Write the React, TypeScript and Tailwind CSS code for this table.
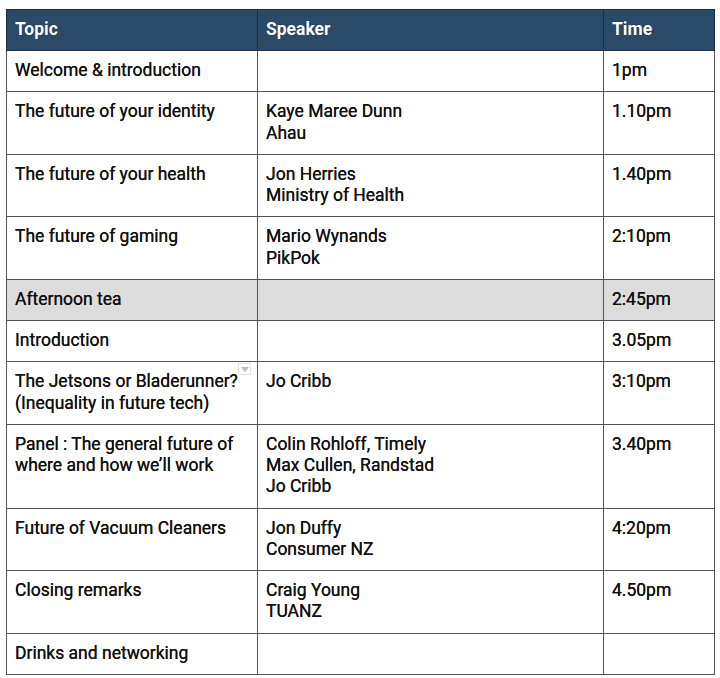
type Row = {
  topic: string[];
  speaker: string[];
  time: string;
  shaded?: boolean;
  menu?: boolean;
};

const rows: Row[] = [
  { topic: ["Welcome & introduction"], speaker: [], time: "1pm" },
  { topic: ["The future of your identity"], speaker: ["Kaye Maree Dunn", "Ahau"], time: "1.10pm" },
  { topic: ["The future of your health"], speaker: ["Jon Herries", "Ministry of Health"], time: "1.40pm" },
  { topic: ["The future of gaming"], speaker: ["Mario Wynands", "PikPok"], time: "2:10pm" },
  { topic: ["Afternoon tea"], speaker: [], time: "2:45pm", shaded: true },
  { topic: ["Introduction"], speaker: [], time: "3.05pm" },
  { topic: ["The Jetsons or Bladerunner?", "(Inequality in future tech)"], speaker: ["Jo Cribb"], time: "3:10pm", menu: true },
  {
    topic: ["Panel : The general future of", "where and how we’ll work"],
    speaker: ["Colin Rohloff, Timely", "Max Cullen, Randstad", "Jo Cribb"],
    time: "3.40pm",
  },
  { topic: ["Future of Vacuum Cleaners"], speaker: ["Jon Duffy", "Consumer NZ"], time: "4:20pm" },
  { topic: ["Closing remarks"], speaker: ["Craig Young", "TUANZ"], time: "4.50pm" },
  { topic: ["Drinks and networking"], speaker: [], time: "" },
];

function Lines({ lines }: { lines: string[] }) {
  return (
    <>
      {lines.map((l) => (
        <div key={l}>{l}</div>
      ))}
    </>
  );
}

export default function App() {
  return (
    <div className="min-h-[678px] bg-white pl-[6px] pt-[9px] font-['Roboto','Liberation_Sans',sans-serif] text-[17.5px] leading-[21.25px] text-[#111] [text-shadow:0_0_0.4px_#111]">
      <table className="w-[708px] table-fixed border-collapse border border-[#444]">
        <colgroup>
          <col className="w-[251px]" />
          <col className="w-[346px]" />
          <col className="w-[111px]" />
        </colgroup>
        <thead>
          <tr className="h-[41px] bg-[#2a4a68] text-left text-white [text-shadow:0_0_1px_#0b1a2a]">
            <th className="border border-[#1c2f42] px-2 text-[17.5px] font-bold">Topic</th>
            <th className="border border-[#1c2f42] px-2 text-[17.5px] font-bold">Speaker</th>
            <th className="border border-[#1c2f42] px-2 text-[17.5px] font-bold">Time</th>
          </tr>
        </thead>
        <tbody>
          {rows.map((r) => (
            <tr key={r.topic[0]} className={r.shaded ? "bg-[#dcdcdc]" : "bg-white"}>
              <td className="relative border border-[#555] px-2 pt-[9px] pb-[10px] align-top">
                <Lines lines={r.topic} />
                {r.menu && (
                  <div className="absolute right-[6px] top-[1px] flex h-[12px] w-[13px] items-center justify-center border border-[#e4e4e4] bg-white [text-shadow:none]">
                    <svg width="8" height="5" viewBox="0 0 8 5">
                      <path d="M0 0h8L4 5z" fill="#bbb" />
                    </svg>
                  </div>
                )}
              </td>
              <td className="border border-[#555] px-2 pt-[9px] pb-[10px] align-top">
                <Lines lines={r.speaker} />
              </td>
              <td className="border border-[#555] px-2 pt-[9px] pb-[10px] align-top">{r.time}</td>
            </tr>
          ))}
        </tbody>
      </table>
    </div>
  );
}
